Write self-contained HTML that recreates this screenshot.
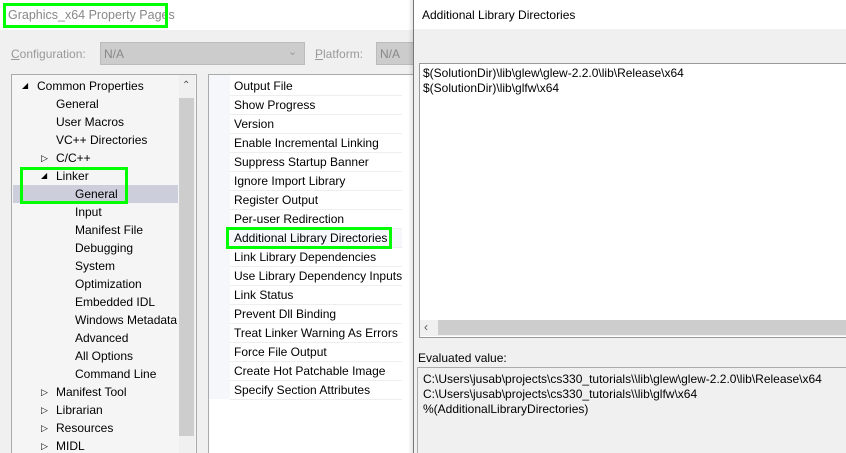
<!DOCTYPE html>
<html><head><style>
*{margin:0;padding:0;box-sizing:border-box}
html,body{width:846px;height:453px;overflow:hidden}
body{background:#f0f0f0;font-family:"Liberation Sans",sans-serif;font-size:12px;color:#000;position:relative}
.a{position:absolute;white-space:nowrap}
.g{border:3px solid #00ff00;position:absolute}
.t div{height:18px;line-height:18px;position:relative}
.t i{position:absolute;font-style:normal;font-size:8px;line-height:18px;top:0}
.p div{border-bottom:1px solid #eee;padding-left:4px;height:19px;line-height:19px}
</style></head><body>
<div class="a" style="left:0;top:0;width:846px;height:30px;background:#fff"></div>
<div class="a" style="left:8px;top:8px;color:#888;font-size:12.5px">Graphics_x64 Property Pages</div>
<div class="g" style="left:3px;top:3px;width:165px;height:25px"></div>

<div class="a" style="left:11px;top:47px;color:#999"><u>C</u>onfiguration:</div>
<div class="a" style="left:100px;top:42px;width:205px;height:23px;background:#ccc;border:1px solid #bbb"></div>
<div class="a" style="left:104px;top:47px;color:#888">N/A</div>
<div class="a" style="left:288px;top:45px;color:#999;font-size:11px">&#8964;</div>
<div class="a" style="left:315px;top:47px;color:#999"><u>P</u>latform:</div>
<div class="a" style="left:376px;top:42px;width:40px;height:23px;background:#ccc;border:1px solid #bbb"></div>
<div class="a" style="left:380px;top:47px;color:#888">N/A</div>

<!-- tree -->
<div class="a" style="left:11px;top:74px;width:186px;height:380px;background:#f5f5f5;border:1px solid #aaa"></div>
<div class="a" style="left:179px;top:75px;width:16px;height:378px;background:#f0f0f0"></div>
<div class="a" style="left:179px;top:98px;width:15px;height:338px;background:#cdcdcd"></div>
<div class="a" style="left:182px;top:80px;font-size:10px;color:#555">&#8963;</div>
<div class="a" style="left:13px;top:185px;width:165px;height:18px;background:#cccedb"></div>
<div class="a t" style="left:0;top:77px;width:178px">
<div style="padding-left:37px"><i style="left:22px">&#9698;</i>Common Properties</div>
<div style="padding-left:56px">General</div>
<div style="padding-left:56px">User Macros</div>
<div style="padding-left:56px">VC++ Directories</div>
<div style="padding-left:56px"><i style="left:41px;font-size:9px">&#9655;</i>C/C++</div>
<div style="padding-left:56px"><i style="left:41px">&#9698;</i>Linker</div>
<div style="padding-left:75px">General</div>
<div style="padding-left:75px">Input</div>
<div style="padding-left:75px">Manifest File</div>
<div style="padding-left:75px">Debugging</div>
<div style="padding-left:75px">System</div>
<div style="padding-left:75px">Optimization</div>
<div style="padding-left:75px">Embedded IDL</div>
<div style="padding-left:75px">Windows Metadata</div>
<div style="padding-left:75px">Advanced</div>
<div style="padding-left:75px">All Options</div>
<div style="padding-left:75px">Command Line</div>
<div style="padding-left:56px"><i style="left:41px;font-size:9px">&#9655;</i>Manifest Tool</div>
<div style="padding-left:56px"><i style="left:41px;font-size:9px">&#9655;</i>Librarian</div>
<div style="padding-left:56px"><i style="left:41px;font-size:9px">&#9655;</i>Resources</div>
<div style="padding-left:56px"><i style="left:41px;font-size:9px">&#9655;</i>MIDL</div>
</div>
<div class="g" style="left:20px;top:167px;width:108px;height:37px"></div>

<!-- property list -->
<div class="a" style="left:208px;top:74px;width:210px;height:380px;background:#fff;border:1px solid #aaa"></div>
<div class="a" style="left:209px;top:75px;width:21px;height:324px;background:#f5f7fb"></div>
<div class="a p" style="left:230px;top:77px">
<div>Output File</div>
<div>Show Progress</div>
<div>Version</div>
<div>Enable Incremental Linking</div>
<div>Suppress Startup Banner</div>
<div>Ignore Import Library</div>
<div>Register Output</div>
<div>Per-user Redirection</div>
<div style="background:#f5f7fb">Additional Library Directories</div>
<div>Link Library Dependencies</div>
<div>Use Library Dependency Inputs</div>
<div>Link Status</div>
<div>Prevent Dll Binding</div>
<div>Treat Linker Warning As Errors</div>
<div>Force File Output</div>
<div>Create Hot Patchable Image</div>
<div>Specify Section Attributes</div>
</div>
<div class="g" style="left:226px;top:227px;width:166px;height:22px"></div>

<!-- overlay dialog -->
<div class="a" style="left:408px;top:0;width:6px;height:453px;background:linear-gradient(to right,rgba(0,0,0,0),rgba(0,0,0,0.12))"></div>
<div class="a" style="left:413px;top:0;width:433px;height:453px;background:#f0f0f0;border-left:1px solid #777"></div>
<div class="a" style="left:414px;top:0;width:432px;height:29px;background:#fff"></div>
<div class="a" style="left:422px;top:8px">Additional Library Directories</div>
<div class="a" style="left:419px;top:63px;width:430px;height:275px;background:#fff;border:1px solid #999"></div>
<div class="a" style="left:423px;top:66px;line-height:15px">$(SolutionDir)\lib\glew\glew-2.2.0\lib\Release\x64<br>$(SolutionDir)\lib\glfw\x64</div>
<div class="a" style="left:420px;top:320px;width:426px;height:16px;background:#f0f0f0"></div>
<div class="a" style="left:438px;top:320px;width:408px;height:15px;background:#cdcdcd"></div>
<div class="a" style="left:424px;top:320px;color:#555;font-size:12px">&#8249;</div>
<div class="a" style="left:418px;top:351px">Evaluated value:</div>
<div class="a" style="left:417px;top:367px;width:432px;height:90px;background:#f0f0f0;border:1px solid #aaa"></div>
<div class="a" style="left:423px;top:372px;line-height:15px">C:\Users\jusab\projects\cs330_tutorials\\lib\glew\glew-2.2.0\lib\Release\x64<br>C:\Users\jusab\projects\cs330_tutorials\\lib\glfw\x64<br>%(AdditionalLibraryDirectories)</div>
</body></html>
